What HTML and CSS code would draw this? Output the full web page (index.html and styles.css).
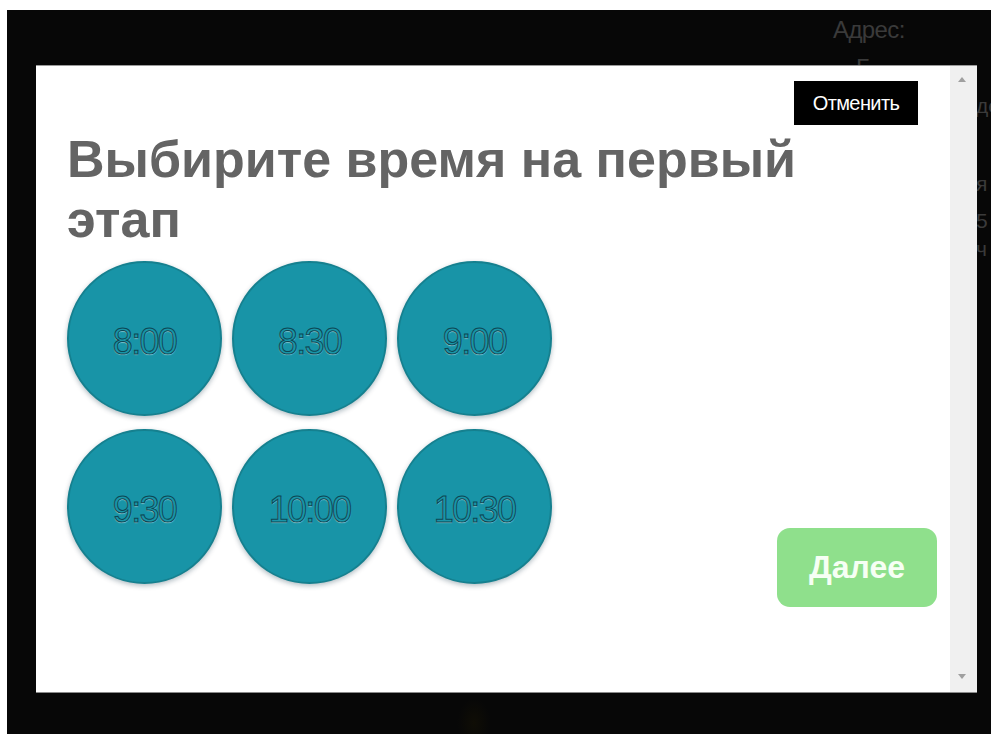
FILE: index.html
```html
<!DOCTYPE html>
<html lang="ru">
<head>
<meta charset="utf-8">
<title>Выбор времени</title>
<link rel="stylesheet" href="styles.css">
</head>
<body>
<div class="backdrop">
  <div class="behind" aria-hidden="true">
    <div class="addr">Адрес:</div>
    <div class="addr-g">Г</div>
    <div class="edge">
      <span class="e1">де</span>
      <span class="e2">я</span>
      <span class="e3">5</span>
      <span class="e4">ч</span>
    </div>
    <div class="glow"></div>
  </div>

  <div class="modal">
    <div class="modal-body">
      <div class="top-row">
        <button class="cancel">Отменить</button>
      </div>
      <h1 class="title">Выбирите время на первый этап</h1>
      <div class="main-row">
        <div class="times">
          <button class="slot">8:00</button>
          <button class="slot">8:30</button>
          <button class="slot">9:00</button>
          <button class="slot">9:30</button>
          <button class="slot">10:00</button>
          <button class="slot">10:30</button>
        </div>
        <button class="next">Далее</button>
      </div>
    </div>
    <div class="scrollbar">
      <span class="arrow up"></span>
      <span class="arrow down"></span>
    </div>
  </div>
</div>
</body>
</html>
```

FILE: styles.css
```css
html, body {
  margin: 0;
  padding: 0;
  background: #ffffff;
}

body {
  font-family: "Liberation Sans", Arial, sans-serif;
}

/* dark overlay over the page */
.backdrop {
  position: relative;
  margin: 10px 0 0 7px;
  height: 724px;
  background: #070707;
  padding: 55px 0 0 29px;
  box-sizing: border-box;
  overflow: hidden;
}

/* page content dimmed under the overlay */
.behind {
  position: absolute;
  inset: 0;
  color: #3a3a3a;
  font-size: 24px;
  pointer-events: none;
}

.addr {
  position: absolute;
  left: 826px;
  top: 6px;
  letter-spacing: -0.6px;
}

.addr-g {
  position: absolute;
  left: 849px;
  top: 44px;
}

.edge span {
  position: absolute;
  left: 969px;
  font-size: 21px;
}
.edge .e1 { top: 84px; }
.edge .e2 { top: 162px; }
.edge .e3 { top: 199px; }
.edge .e4 { top: 227px; }

.glow {
  position: absolute;
  left: 450px;
  top: 688px;
  width: 34px;
  height: 50px;
  background: radial-gradient(ellipse at center, rgba(40, 32, 0, 0.25), rgba(0, 0, 0, 0) 70%);
}

/* dialog */
.modal {
  position: relative;
  display: flex;
  width: 941px;
  height: 628px;
  background: #ffffff;
  border-top: 1px solid #9a9a9a;
  border-bottom: 1px solid #8a8a8a;
  box-sizing: border-box;
}

.modal-body {
  flex: 1;
  padding: 15px 13px 0 31px;
  box-sizing: border-box;
}

.top-row {
  display: flex;
  justify-content: flex-end;
  padding-right: 19px;
}

.cancel {
  width: 124px;
  height: 44px;
  border: 0;
  background: #000000;
  color: #ffffff;
  font-family: "Liberation Sans", Arial, sans-serif;
  font-size: 20px;
  letter-spacing: -0.6px;
  padding: 0;
}

.title {
  margin: 4px 0 0 0;
  max-width: 830px;
  font-size: 52px;
  line-height: 60px;
  font-weight: bold;
  color: #646464;
  letter-spacing: 0;
}

.main-row {
  display: flex;
  align-items: flex-end;
  justify-content: space-between;
  margin-top: 12px;
}

.times {
  display: grid;
  grid-template-columns: repeat(3, 155px);
  column-gap: 10px;
  row-gap: 13px;
  margin-bottom: 23px;
}

.slot {
  width: 155px;
  height: 155px;
  border-radius: 50%;
  border: 2px solid #15808f;
  background: #1894a7;
  box-shadow: 0 2px 5px rgba(0, 40, 60, 0.3);
  padding: 6px 0 0 0;
  font-family: "Liberation Sans", Arial, sans-serif;
  font-size: 36px;
  letter-spacing: -1.7px;
  color: #1996a9;
  -webkit-text-stroke: 1px #0c4653;
  text-shadow: 0 1px 1px rgba(210, 245, 250, 0.8);
}

.next {
  width: 160px;
  height: 79px;
  border: 0;
  border-radius: 13px;
  background: #8fe08c;
  color: #f6fff4;
  font-family: "Liberation Sans", Arial, sans-serif;
  font-size: 32px;
  font-weight: bold;
  padding: 0;
}

/* scrollbar track */
.scrollbar {
  position: relative;
  width: 27px;
  background: #f0f0f0;
}

.arrow {
  position: absolute;
  left: 8px;
  width: 0;
  height: 0;
  border-left: 4px solid transparent;
  border-right: 4px solid transparent;
}

.arrow.up {
  top: 11px;
  border-bottom: 5px solid #a0a0a0;
}

.arrow.down {
  bottom: 13px;
  border-top: 5px solid #a0a0a0;
}
```
